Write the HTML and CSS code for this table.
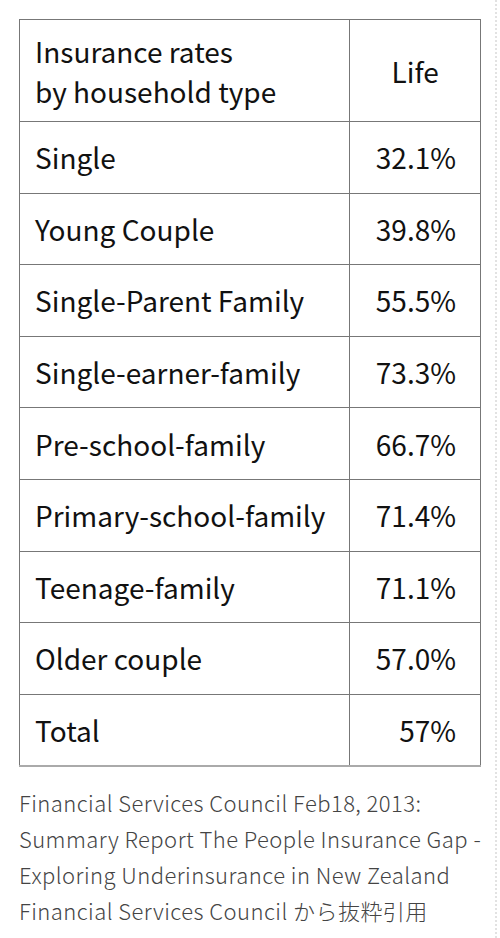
FILE: index.html
```html
<!DOCTYPE html>
<html lang="ja">
<head>
<meta charset="UTF-8">
<title>Insurance rates by household type</title>
<link rel="stylesheet" href="styles.css">
</head>
<body>
<div class="page">
<table class="rates">
  <tr class="head">
    <th class="type">Insurance rates<br>by household type</th>
    <th class="life">Life</th>
  </tr>
  <tr><td>Single</td><td class="num">32.1%</td></tr>
  <tr><td>Young Couple</td><td class="num">39.8%</td></tr>
  <tr><td>Single-Parent Family</td><td class="num">55.5%</td></tr>
  <tr><td>Single-earner-family</td><td class="num">73.3%</td></tr>
  <tr><td>Pre-school-family</td><td class="num">66.7%</td></tr>
  <tr><td>Primary-school-family</td><td class="num">71.4%</td></tr>
  <tr><td>Teenage-family</td><td class="num">71.1%</td></tr>
  <tr><td>Older couple</td><td class="num">57.0%</td></tr>
  <tr class="total"><td>Total</td><td class="num">57%</td></tr>
</table>
<p class="source">
Financial Services Council Feb18, 2013:<br>
Summary Report The People Insurance Gap -<br>
Exploring Underinsurance in New Zealand<br>
Financial Services Council から抜粋引用
</p>
</div>
</body>
</html>
```

FILE: styles.css
```css
html, body {
  margin: 0;
  padding: 0;
  background: #fff;
}
body {
  font-family: "Noto Sans CJK JP", "Open Sans", sans-serif;
  color: #111;
}
.page {
  width: 497px;
  min-height: 938px;
  box-sizing: border-box;
  padding: 19px 0 0 19px;
  border-right: 2px dotted #e2e2e2;
}
.rates {
  width: 462px;
  border-collapse: collapse;
}
.rates th, .rates td {
  border: 1px solid #777;
  font-size: 28px;
  font-weight: 400;
  height: 71.6px;
  padding: 0 24px 0 15px;
  box-sizing: border-box;
  white-space: nowrap;
}
.rates .head th {
  height: 102px;
  line-height: 40px;
}
.rates .type {
  text-align: left;
  width: 329px;
}
.rates .life {
  text-align: center;
  padding: 0;
}
.rates .num {
  text-align: right;
}
.rates .total td {
  border-bottom: 2px solid #aaa;
}
.source {
  margin: 17px 0 0;
  font-size: 22px;
  font-weight: 300;
  line-height: 36px;
  color: #444;
  letter-spacing: 0.45px;
  white-space: nowrap;
}
```
